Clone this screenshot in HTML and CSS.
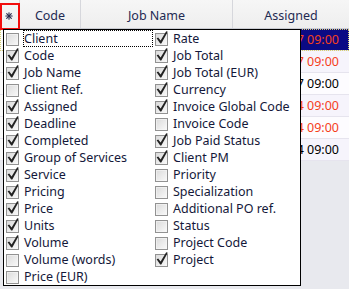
FILE: index.html
```html
<!DOCTYPE html>
<html lang="en">

<head>
  <meta charset="UTF-8">
  <title>Jobs</title>
  <link rel="stylesheet" href="styles.css">
</head>

<body>
  <svg class="defs" width="0" height="0">
    <defs>
      <linearGradient id="boxfill" x1="0" y1="0" x2="1" y2="1">
        <stop offset="0" stop-color="#d9d9d9" />
        <stop offset="1" stop-color="#fbfbfb" />
      </linearGradient>
      <symbol id="off" viewBox="0 0 14 16">
        <rect x="0.5" y="3.5" width="12" height="12" fill="url(#boxfill)" stroke="#929292" />
        <rect x="1.5" y="4.5" width="10" height="10" fill="none" stroke="#f6f6f6" stroke-opacity="0.6" />
      </symbol>
      <symbol id="on" viewBox="0 0 14 16">
        <rect x="0.5" y="3.5" width="12" height="12" fill="url(#boxfill)" stroke="#929292" />
        <polygon points="1.6,8.2 3.2,7.4 5.6,10.6 11.2,1.2 12.8,1.8 6.3,13.6 5.2,13.6" fill="#222" />
      </symbol>
    </defs>
  </svg>

  <div class="grid">
    <div class="head">
      <div class="hcell col-ind">
        <svg width="8" height="8" viewBox="0 0 8 8">
          <g stroke="#27284a" stroke-width="1.1" stroke-linecap="round">
            <line x1="4" y1="0.8" x2="4" y2="7.2" />
            <line x1="0.8" y1="4" x2="7.2" y2="4" />
            <line x1="1.7" y1="1.7" x2="6.3" y2="6.3" />
            <line x1="6.3" y1="1.7" x2="1.7" y2="6.3" />
          </g>
        </svg>
      </div>
      <div class="hcell col-code">Code</div>
      <div class="hcell col-job">Job Name</div>
      <div class="hcell col-assigned">Assigned</div>
    </div>

    <div class="rows">
      <div class="row selected late">
        <span class="cell col-ind"></span><span class="cell col-code"></span><span class="cell col-job"></span><span class="cell col-assigned">7 09:00</span>
      </div>
      <div class="row alt late">
        <span class="cell col-ind"></span><span class="cell col-code"></span><span class="cell col-job"></span><span class="cell col-assigned">7 09:00</span>
      </div>
      <div class="row">
        <span class="cell col-ind"></span><span class="cell col-code"></span><span class="cell col-job"></span><span class="cell col-assigned">7 09:00</span>
      </div>
      <div class="row alt late">
        <span class="cell col-ind"></span><span class="cell col-code"></span><span class="cell col-job"></span><span class="cell col-assigned">4 09:00</span>
      </div>
      <div class="row late">
        <span class="cell col-ind"></span><span class="cell col-code"></span><span class="cell col-job"></span><span class="cell col-assigned">4 09:00</span>
      </div>
      <div class="row alt">
        <span class="cell col-ind"></span><span class="cell col-code"></span><span class="cell col-job"></span><span class="cell col-assigned">4 09:00</span>
      </div>
    </div>

    <!-- highlight round the column chooser button -->
    <span class="mark"></span>

    <!-- column chooser dropdown -->
    <div class="chooser">
      <label class="item"><svg><use href="#off" /></svg><span class="text focus">Client</span></label>
      <label class="item"><svg><use href="#on" /></svg><span class="text">Code</span></label>
      <label class="item"><svg><use href="#on" /></svg><span class="text">Job Name</span></label>
      <label class="item"><svg><use href="#off" /></svg><span class="text">Client Ref.</span></label>
      <label class="item"><svg><use href="#on" /></svg><span class="text">Assigned</span></label>
      <label class="item"><svg><use href="#on" /></svg><span class="text">Deadline</span></label>
      <label class="item"><svg><use href="#on" /></svg><span class="text">Completed</span></label>
      <label class="item"><svg><use href="#on" /></svg><span class="text">Group of Services</span></label>
      <label class="item"><svg><use href="#on" /></svg><span class="text">Service</span></label>
      <label class="item"><svg><use href="#on" /></svg><span class="text">Pricing</span></label>
      <label class="item"><svg><use href="#on" /></svg><span class="text">Price</span></label>
      <label class="item"><svg><use href="#on" /></svg><span class="text">Units</span></label>
      <label class="item"><svg><use href="#on" /></svg><span class="text">Volume</span></label>
      <label class="item"><svg><use href="#off" /></svg><span class="text">Volume (words)</span></label>
      <label class="item"><svg><use href="#off" /></svg><span class="text">Price (EUR)</span></label>

      <label class="item"><svg><use href="#on" /></svg><span class="text">Rate</span></label>
      <label class="item"><svg><use href="#on" /></svg><span class="text">Job Total</span></label>
      <label class="item"><svg><use href="#on" /></svg><span class="text">Job Total (EUR)</span></label>
      <label class="item"><svg><use href="#on" /></svg><span class="text">Currency</span></label>
      <label class="item"><svg><use href="#on" /></svg><span class="text">Invoice Global Code</span></label>
      <label class="item"><svg><use href="#off" /></svg><span class="text">Invoice Code</span></label>
      <label class="item"><svg><use href="#on" /></svg><span class="text">Job Paid Status</span></label>
      <label class="item"><svg><use href="#on" /></svg><span class="text">Client PM</span></label>
      <label class="item"><svg><use href="#off" /></svg><span class="text">Priority</span></label>
      <label class="item"><svg><use href="#off" /></svg><span class="text">Specialization</span></label>
      <label class="item"><svg><use href="#off" /></svg><span class="text">Additional PO ref.</span></label>
      <label class="item"><svg><use href="#off" /></svg><span class="text">Status</span></label>
      <label class="item"><svg><use href="#off" /></svg><span class="text">Project Code</span></label>
      <label class="item"><svg><use href="#on" /></svg><span class="text">Project</span></label>
    </div>
  </div>
</body>

</html>
```

FILE: styles.css
```css
body {
  margin: 0;
  padding: 0;
  font-family: "Noto Sans", "Open Sans", sans-serif;
  font-size: 12px;
  background-color: #e8e9ee;
}

.defs {
  position: absolute;
  width: 0;
  height: 0;
}

.grid {
  position: relative;
  width: 349px;
  height: 289px;
  overflow: hidden;
  background-color: #e8e9ee;
}

/* header */

.head {
  display: flex;
  height: 28px;
  border-bottom: 1px solid #c9cbd2;
  background: linear-gradient(#f6f6f6, #eeeeee);
}

.hcell {
  display: flex;
  align-items: center;
  justify-content: center;
  box-sizing: border-box;
  border-right: 1px solid #d6d7dc;
  color: #1e2a52;
  font-size: 12.5px;
  padding-top: 3px;
}

.col-ind {
  width: 20px;
  flex: none;
}

.col-code {
  width: 61px;
  flex: none;
}

.col-job {
  width: 152px;
  flex: none;
}

.col-assigned {
  flex: 1;
  border-right: none;
}

.hcell.col-ind svg {
  margin-left: -1px;
}

/* data rows */

.row {
  display: flex;
  height: 22px;
  box-sizing: border-box;
  border-bottom: 1px solid #e6e4ee;
  background-color: #fdfcff;
  color: #000;
  font-size: 12.5px;
}

.row.alt {
  background-color: #f6f4fc;
}

.row.late {
  color: #f5401c;
}

.row.selected {
  background-color: #0b0a84;
  outline: 1px dotted #d8d070;
  outline-offset: -1px;
}

.cell {
  display: flex;
  align-items: center;
  box-sizing: border-box;
}

.row .col-ind {
  background-color: #fafafa;
}

.cell.col-assigned {
  justify-content: flex-end;
  padding-right: 10px;
  white-space: nowrap;
}

.mark {
  position: absolute;
  left: 0;
  top: 3px;
  width: 20px;
  height: 27px;
  box-sizing: border-box;
  border: 2px solid #f20d0d;
}

/* column chooser */

.chooser {
  position: absolute;
  left: 3px;
  top: 29px;
  width: 298px;
  height: 257px;
  box-sizing: border-box;
  border: 1px solid #000;
  background: #fff;
  display: grid;
  grid-auto-flow: column;
  grid-template-rows: repeat(15, 17px);
  grid-template-columns: 149px 147px;
  overflow: hidden;
}

.item {
  display: flex;
  align-items: stretch;
  padding-left: 2px;
  min-width: 0;
  color: #14183a;
  font-size: 12.5px;
  white-space: nowrap;
}

.item svg {
  width: 14px;
  height: 16px;
  flex: none;
}

.text {
  flex: 1;
  display: flex;
  align-items: center;
  margin-left: 3px;
  padding-bottom: 1px;
  border: 1px solid transparent;
}

.text.focus {
  border: 1px dotted #000;
}
```
